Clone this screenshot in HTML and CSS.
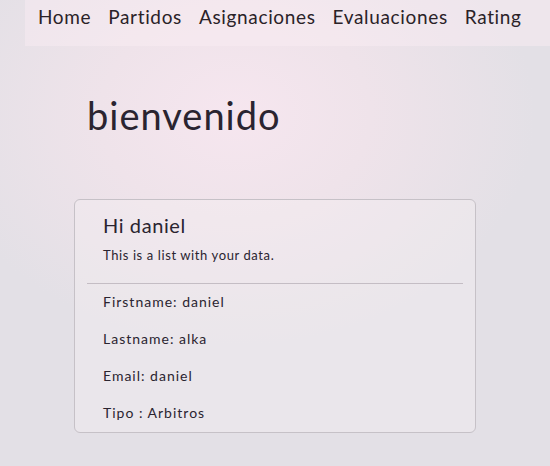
FILE: index.html
```html
<!DOCTYPE html>
<html>
<head>
<meta charset="utf-8">
<link rel="stylesheet" href="styles.css">
</head>
<body>
<nav class="nav">
  <a class="nav-link">Home</a>
  <a class="nav-link">Partidos</a>
  <a class="nav-link">Asignaciones</a>
  <a class="nav-link">Evaluaciones</a>
  <a class="nav-link">Rating</a>
</nav>
<main class="main">
  <h1 class="title">bienvenido</h1>
  <section class="card">
    <div class="card-body">
      <h2 class="card-title">Hi daniel</h2>
      <p class="card-text">This is a list with your data.</p>
    </div>
    <hr class="divider">
    <ul class="data-list">
      <li>Firstname: daniel</li>
      <li>Lastname: alka</li>
      <li>Email: daniel</li>
      <li>Tipo : Arbitros</li>
    </ul>
  </section>
</main>
</body>
</html>
```
FILE: styles.css
```css
html, body {
  margin: 0;
  padding: 0;
  height: 100%;
}
body {
  font-family: Lato, "Noto Sans", sans-serif;
  color: #2a2430;
  background: radial-gradient(ellipse 300px 230px at 235px 115px, #f6e6ef 0%, #efe3ea 45%, #e3e0e6 100%);
  background-color: #e2e0e5;
}
.nav {
  margin-left: 25px;
  height: 46px;
  display: flex;
  align-items: flex-start;
  gap: 17px;
  padding-left: 13px;
  background: rgba(250, 238, 244, 0.45);
}
.nav-link {
  font-size: 19px;
  line-height: 20px;
  padding-top: 7px;
  color: #2a2228;
  letter-spacing: 0.65px;
}
.main {
  padding-left: 74px;
}
.title {
  margin: 47px 0 0 13px;
  font-weight: 400;
  font-size: 38px;
  line-height: 44px;
  color: #2a2430;
  letter-spacing: 1px;
}
.card {
  margin-top: 62px;
  width: 400px;
  height: 232px;
  border: 1px solid #c6c1c7;
  border-radius: 6px;
  background: rgba(244, 240, 243, 0.4);
}
.card-body {
  padding: 13px 0 0 28px;
}
.card-title {
  margin: 0;
  font-weight: 400;
  font-size: 20px;
  line-height: 24px;
  letter-spacing: 0.6px;
}
.card-text {
  margin: 10px 0 0;
  font-size: 13px;
  line-height: 16px;
  letter-spacing: 0.6px;
}
.divider {
  margin: 20px 12px 0;
  border: 0;
  border-top: 1px solid #c4bdc4;
}
.data-list {
  list-style: none;
  margin: 0;
  padding: 9px 0 0 28px;
  font-size: 14px;
  line-height: 17px;
  letter-spacing: 1px;
}
.data-list li {
  margin-bottom: 20px;
}
```
